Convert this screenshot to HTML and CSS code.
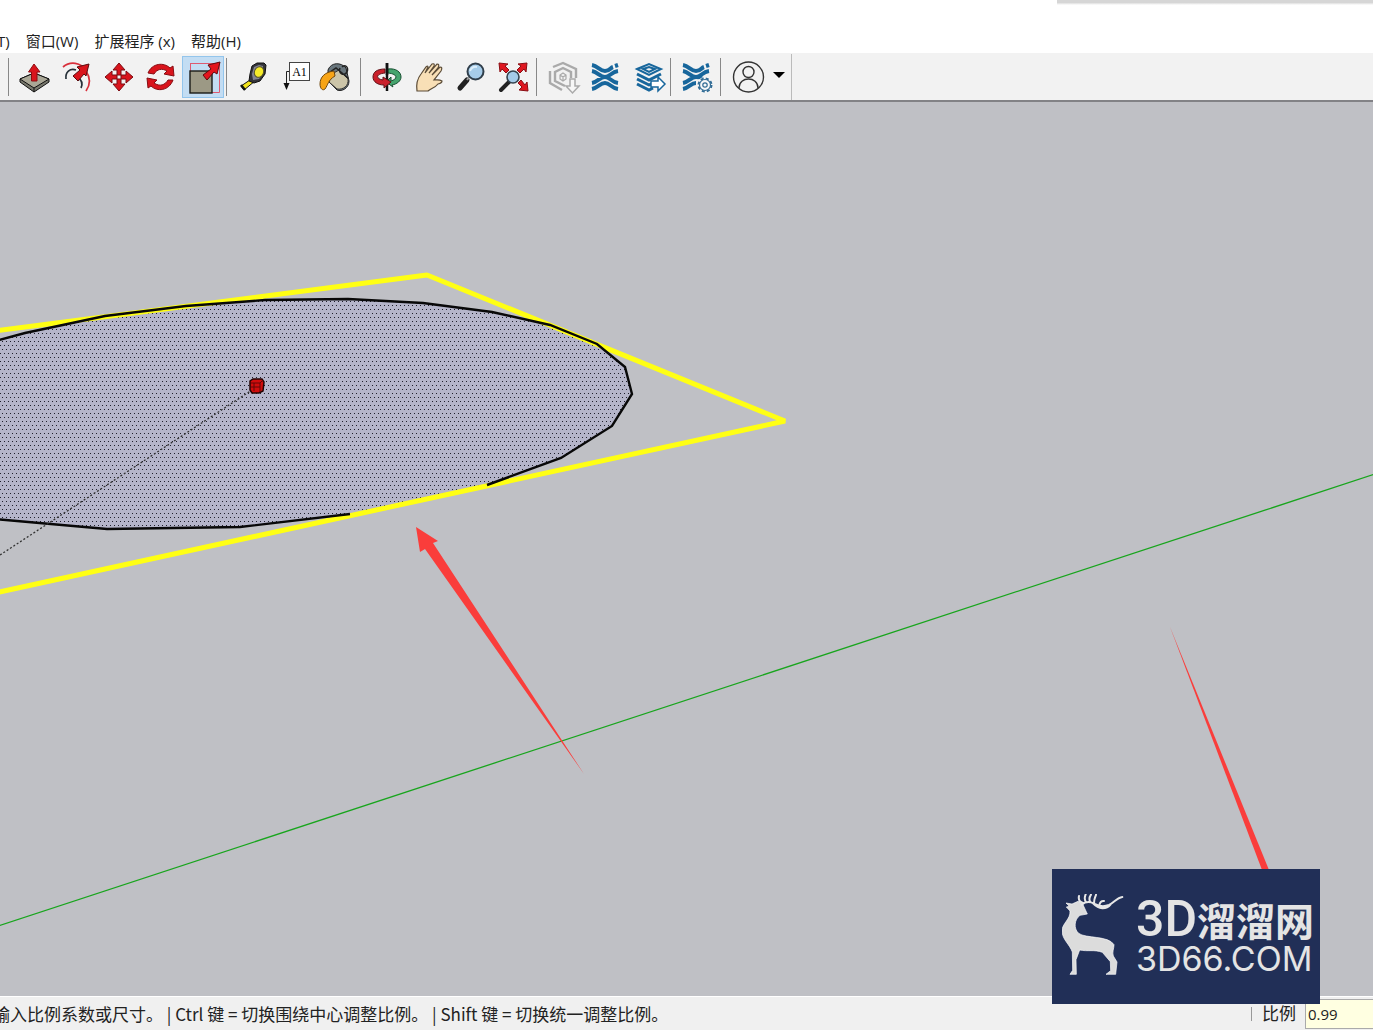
FILE: index.html
```html
<!DOCTYPE html>
<html lang="zh-CN">
<head>
<meta charset="utf-8">
<title>SketchUp</title>
<link rel="stylesheet" href="styles.css">
</head>
<body>
<div class="app">
  <header class="titlebar"><div class="titlebar-shadow"></div></header>
  <nav class="menubar">
    <button class="menu">T)</button>
    <button class="menu">窗口(W)</button>
    <button class="menu">扩展程序 (x)</button>
    <button class="menu">帮助(H)</button>
  </nav>
  <div class="toolbar-row">
    <div class="toolbar" role="toolbar">
      <div class="group">
        <button class="tool" aria-label="推/拉"><svg viewBox="0 0 42 42"><path d="M6 23L20 17L35 23V26L20 36L6 26Z" fill="#77776c" stroke="#111"/><path d="M6 23L20 17L35 23L20 32Z" fill="#aaa796" stroke="#111"/><path d="M20 32V36" stroke="#111"/><path d="M17.500 25V16H14.500L20 8L26 16H23V25Z" fill="#d9141c" stroke="#8d0c10"/></svg></button>
        <button class="tool" aria-label="偏移"><svg viewBox="0 0 42 42"><path d="M7 11C14 5 25 6 30 15C34 21 35 28 30 35" fill="none" stroke="#d8303c" stroke-width="1.700"/><path d="M10 23C9 16 14 12 20 14M21 20C26 24 27 28 25 32" fill="none" stroke="#263039" stroke-width="1.700"/><path d="M17 20L24 14L21 11L33 8L30 20L28 18L22 25Z" fill="#d9141c" stroke="#590b0e"/></svg></button>
        <button class="tool" aria-label="移动"><svg viewBox="0 0 42 42"><g fill="#d9141c" stroke="#7b0c12"><path d="M19 19V14H15L21 7L27 14H23V19Z"/><path d="M23 19H28V15L35 21L28 27V23H23Z"/><path d="M19 23V28H15L21 35L27 28H23V23Z"/><path d="M19 19H14V15L7 21L14 27V23H19Z"/></g></svg></button>
        <button class="tool" aria-label="旋转"><svg viewBox="0 0 42 42"><g fill="#d9141c" stroke="#850d13"><path d="M8 17C12 7 24 6 30 12L33 10L34 20L24 18L27 15C22 12 17 13 14 18Z"/><path d="M33 24C29 35 17 36 11 30L8 32L7 22L17 24L14 27C20 31 25 29 28 24Z"/></g></svg></button>
        <button class="tool tool-active" aria-label="缩放" aria-pressed="true"><svg viewBox="0 0 42 42"><path d="M8 7.500H37.500V36.500H29M8.500 7V15" fill="none" stroke="#de5a70"/><rect x="8" y="15" width="22" height="22" fill="#9c9985" stroke="#1a1a16" stroke-width="1.400"/><path d="M21 19L29 13L26 9L38 6L35 18L32 16L25 24Z" fill="#e3141d" stroke="#5c090d"/></svg></button>
      </div>
      <div class="group">
        <button class="tool" aria-label="卷尺"><svg viewBox="0 0 42 42"><path d="M9 30L21 22L23 25L12 34Z" fill="#f3e41d" stroke="#111"/><path d="M9 29L13 34" stroke="#111" stroke-width="2.500"/><path d="M18 18L20 10L25 7L32 7L34 9L33 18L28 25L22 27L17 25Z" fill="#34343a" stroke="#111"/><path d="M20 18L22 11L27 9L31 10L31 18L27 23L21 24Z" fill="#858694"/><ellipse cx="27" cy="16" rx="4.500" ry="5.500" transform="rotate(25 27 16)" fill="#f6ec29" stroke="#55522a"/></svg></button>
        <button class="tool" aria-label="文字标注"><svg viewBox="0 0 42 42"><rect x="15.500" y="6.500" width="20" height="18" fill="#fff" stroke="#444"/><path d="M15 15.500H12.500V28" fill="none" stroke="#222"/><path d="M9.500 27H15.500L12.500 34Z" fill="#111"/><text x="25.500" y="20" text-anchor="middle" class="annotation-icon">A1</text></svg></button>
        <button class="tool" aria-label="材质"><svg viewBox="0 0 42 42"><path d="M12 14C15 6 25 6 30 12L33 25C33 32 26 36 21 34L12 25Z" fill="#69767d" stroke="#222"/><path d="M16 18L23 14L32 23C33 30 27 34 21 33L13 26Z" fill="#ccc5a9" stroke="#333"/><path d="M14 16L20 12L32 22M24 12C22 17 28 21 31 16C33 11 29 8 26 11" stroke="#222" fill="none" stroke-width="1.500"/><path d="M18 15C9 16 4 21 4 28C4 33 7 35 9 33C12 29 12 24 19 20Z" fill="#f7a416" stroke="#6f460c"/></svg></button>
      </div>
      <div class="group">
        <button class="tool" aria-label="环绕观察"><svg viewBox="0 0 42 42"><path d="M21 7V35" stroke="#111" stroke-width="2.500"/><path d="M22 13C30 12 35 16 35 21C35 25 31 28 26 29L27 31L20 26L25 21V25C32 23 32 18 22 17Z" fill="#45a46d" stroke="#174f31"/><path d="M19 13C11 13 7 16 7 21C7 26 12 29 18 29V32L25 26L17 21V24C10 23 9 18 19 17Z" fill="#ca202b" stroke="#5e1117"/><path d="M21 7V19" stroke="#111" stroke-width="2.500"/></svg></button>
        <button class="tool" aria-label="平移"><svg viewBox="0 0 42 42"><path d="M9 35C8 28 9 23 13 18L18 11Q20 9 20 11L17 17L24 8Q27 7 26 10L21 17L29 8Q32 8 30 12L24 19L32 11Q35 11 33 15L26 24C28 24 31 23 34 25Q34 27 30 28C27 32 23 32 20 35Z" fill="#f8dfb6" stroke="#5a4b37" stroke-width="1.200"/></svg></button>
        <button class="tool" aria-label="缩放视图"><svg viewBox="0 0 42 42"><path d="M17 24L10 32" stroke="#222" stroke-width="5" stroke-linecap="round"/><path d="M20 20L17 24" stroke="#999" stroke-width="2"/><circle cx="25.500" cy="15.500" r="8" fill="#a6cce9" stroke="#303e4a" stroke-width="2"/><path d="M20 15Q22 10 27 11" fill="none" stroke="#dceefa" stroke-width="2"/></svg></button>
        <button class="tool" aria-label="充满视窗"><svg viewBox="0 0 42 42"><g fill="#df1720" stroke="#880e14"><path d="M7 7L16 8L13 10L17 14L14 17L10 13L8 16Z"/><path d="M35 7L26 8L29 10L25 14L28 17L32 13L34 16Z"/><path d="M36 35L27 34L30 31L26 27L29 24L33 29L35 26Z"/></g><path d="M17 26L9 34" stroke="#222" stroke-width="4" stroke-linecap="round"/><circle cx="21" cy="21" r="6" fill="#a4cae8" stroke="#34424d" stroke-width="1.600"/></svg></button>
      </div>
      <div class="group">
        <button class="tool" aria-label="3D Warehouse"><svg viewBox="0 0 42 42" fill="none" stroke="#aaa" stroke-width="2.400"><path d="M11 11L21 7L34 13V22M8 15V27L20 34"/><path d="M23 30L13 25V16L21 12L29 16V22"/><path d="M21 17L24 19V23L21 25L18 23V19ZM18 19L21 21L24 19M21 21V25" stroke-width="1.200"/><path d="M28 23H33V30H37L30.500 37L24 30H28Z" fill="#f7f7f7" stroke-width="1.500"/></svg></button>
        <button class="tool" aria-label="扩展仓库"><svg viewBox="0 0 42 42"><g class="blue-line wide"><path d="M8 9C14 10 16 15 21 15S26 12 29 11M8 15C14 16 16 21 21 21S27 16 34 15M8 27C14 26 16 21 21 21S27 26 34 27M8 33C14 32 16 27 21 27S27 32 34 33"/><path d="M31 10L34 9"/></g></svg></button>
        <button class="tool" aria-label="发送图层"><svg viewBox="0 0 42 42"><g class="blue-line"><path d="M11 13L23 8L35 13L23 19ZM17 13L23 11L29 13L23 16Z"/><path d="M11 18L23 24L35 18M11 23L23 29L26 28M11 28L23 34L27 32" stroke-width="3"/></g><path d="M25 25H32V21L39 28L32 35V31H25Z" fill="#fff" stroke="#17669c" stroke-width="1.500"/></svg></button>
      </div>
      <div class="group">
        <button class="tool" aria-label="扩展管理"><svg viewBox="0 0 42 42"><g class="blue-line wide"><path d="M7 9C13 10 15 15 20 15S25 12 28 11M7 15C13 16 15 21 20 21S26 16 33 15M7 27C13 26 15 21 20 21S25 22 28 24M7 33C13 32 15 27 20 27"/><path d="M30 10L33 9"/></g><circle cx="29" cy="29" r="8" fill="#f6f7f8"/><circle cx="29" cy="29" r="6.500" fill="none" stroke="#326c95" stroke-width="2" stroke-dasharray="3 2.100"/><circle cx="29" cy="29" r="5.500" fill="#f6f7f8" stroke="#326c95" stroke-width="1.200"/><circle cx="29" cy="29" r="2.200" fill="none" stroke="#326c95" stroke-width="1.200"/></svg></button>
      </div>
      <div class="group">
        <button class="tool" aria-label="账户"><svg viewBox="0 0 42 42" fill="none" stroke="#333" stroke-width="1.400"><circle cx="22.500" cy="21" r="15"/><circle cx="22.500" cy="16" r="5.500"/><path d="M13 32C13 20 32 20 32 32"/></svg></button>
        <button class="caret" aria-label="账户菜单"><svg viewBox="0 0 18 42"><path d="M5 16H17L11 22Z"/></svg></button>
      </div>
    </div>
  </div>
  <main class="viewport">
    <svg class="scene" viewBox="0 102 1373 894" preserveAspectRatio="xMinYMin slice">
      <defs>
        <pattern id="face-dots" width="4" height="8" patternUnits="userSpaceOnUse"><rect width="4" height="8" fill="#b5b5ca"/><path d="M0 1h1v1h-1zM2 5h1v1h-1z" fill="#20202c"/></pattern>
      </defs>
      <path d="M-2 926L1375 474" stroke="#18a51d" stroke-width="1.300"/>
      <path d="M-5 341L105 316L186 306L265 300L348 299L423 303L492 312L550 325L597 344L625 367L632 394L612 426L561 458L487 485L350 514L240 527L107 529L-5 519Z" fill="url(#face-dots)"/>
      <path d="M-5 331L427 275L785 421L-5 593" fill="none" stroke="#ffff14" stroke-width="5" stroke-linejoin="bevel"/>
      <path d="M-5 341L25 333L105 316L186 306L265 300L348 299L423 303L492 312L550 325L597 344L625 367L632 394L612 426L561 458L487 485M350 514L240 527L107 529L-5 519" fill="none" stroke="#080808" stroke-width="2.400"/>
      <path d="M0 555L252 390" stroke="#333" stroke-width="1.300" stroke-dasharray="2 2"/>
      <path d="M250 381L253 379H262L264 382L263 391L259 393H252L250 390Z" fill="#d00c0c" stroke="#240404" stroke-width="1.500"/>
      <path d="M251 383H260V392M260 383L263 380M254 383V391M251 387H260" fill="none" stroke="#650606"/>
      <path d="M416 527L438 541L433 543L584 774L425 549L420 552Z" fill="#fa3d3b"/>
      <path d="M1170 627L1269 870H1262Z" fill="#fa3d3b"/>
    </svg>
    <div class="watermark">
      <svg class="deer" viewBox="66 102 192 258"><path d="M78 129L96 132L114 124L128 132L142 162L120 166C103 178 100 206 116 220C137 236 205 226 222 254C222 266 216 276 220 288L231 306L227 343H198L212 332L211 305L187 277C164 268 142 275 119 270L108 299L109 343H90L98 331L97 276C89 253 67 239 66 213C66 190 92 178 90 153L79 141L88 139Z" fill="#dcdcdc" stroke="#fff" stroke-width="2"/><path d="M125 134C135 126 148 123 162 131S190 142 207 135C222 128 231 113 247 111M129 129C117 125 115 117 117 108M138 126C131 117 134 111 137 103M151 126C145 117 149 110 153 104M163 131C160 121 166 112 168 104M178 136C179 127 184 122 192 123M160 131C176 148 198 150 212 133" fill="none" stroke="#e7e7e7" stroke-width="6" stroke-linecap="round"/></svg>
      <div class="brand">
        <div class="brand-name"><span class="brand-latin">3D</span>溜溜网</div>
        <div class="brand-url">3D66.COM</div>
      </div>
    </div>
  </main>
  <footer class="statusbar">
    <p class="hint">输入比例系数或尺寸。 | Ctrl 键 = 切换围绕中心调整比例。 | Shift 键 = 切换统一调整比例。</p>
    <label class="measure-label" for="measure">比例</label>
    <input class="measure" id="measure" type="text" value="0.99">
  </footer>
</div>
</body>
</html>
```
FILE: styles.css
```css
* { box-sizing: border-box; }

body {
  margin: 0;
  font-family: "Open Sans", "Noto Sans CJK SC", sans-serif;
  color: #222;
  background: #fff;
}

button {
  margin: 0;
  padding: 0;
  border: 0;
  background: none;
  font: inherit;
  color: inherit;
}

.app {
  display: flex;
  flex-direction: column;
  height: 100vh;
  overflow: hidden;
}

.titlebar {
  display: flex;
  justify-content: flex-end;
  height: 30px;
}

.titlebar-shadow {
  width: 23%;
  height: 5px;
  background: linear-gradient(#d6d6d6 50%, #fff);
}

.menubar {
  display: flex;
  gap: 16px;
  height: 23px;
  margin-left: -3px;
  font-size: 15px;
  line-height: 23px;
}

.menu { white-space: nowrap; }

.toolbar-row {
  display: flex;
  height: 49px;
  padding-top: 1px;
  background: #f2f2f2;
  border-bottom: 2px solid #828286;
}

.toolbar {
  display: flex;
  align-items: center;
  padding: 0 3px 0 8px;
  border-right: 1px solid #bbb;
}

.group {
  display: flex;
  align-items: center;
  height: 38px;
  padding: 0 2px 0 5px;
  border-left: 1px solid #888;
}

.tool, .tool svg { display: block; width: 42px; height: 42px; }
.tool-active { background: #c3ddf3; outline: 1px solid #93c5ec; outline-offset: -1px; }
.caret, .caret svg { display: block; width: 18px; height: 42px; }
.annotation-icon { font: 12px "Liberation Serif", serif; }
.blue-line { fill: none; stroke: #17669c; stroke-width: 2; }
.wide { stroke-width: 4; }

.viewport {
  position: relative;
  flex: 1;
  min-height: 0;
  background: #bfc0c5;
}

.scene { display: block; width: 100%; height: 100%; }

.watermark {
  position: absolute;
  right: 53px;
  bottom: -8px;
  display: flex;
  align-items: center;
  gap: 10px;
  width: 268px;
  height: 135px;
  padding-left: 10px;
  background: #212f57;
  color: #e4e4e4;
}

.deer { width: 64px; height: 86px; }

.brand { white-space: nowrap; }

.brand-name {
  display: flex;
  align-items: center;
  height: 44px;
  font-family: "Noto Sans CJK SC", sans-serif;
  font-size: 39px;
  font-weight: 700;
  line-height: 44px;
}

.brand-latin {
  font-family: Roboto, sans-serif;
  font-size: 50px;
  font-weight: 500;
}

.brand-url {
  height: 36px;
  font-family: Inter, sans-serif;
  font-size: 34px;
  line-height: 36px;
}

.statusbar {
  display: flex;
  align-items: center;
  height: 34px;
  background: #f0f0f0;
  border-top: 1px solid #fff;
  font-size: 17px;
}

.hint {
  flex: 1;
  margin: 0 0 0 -7px;
  font-family: "Noto Sans CJK SC", sans-serif;
  white-space: nowrap;
}

.measure-label {
  padding: 0 9px 0 10px;
  border-left: 1px solid #999;
  line-height: 14px;
}

.measure {
  width: 68px;
  height: 30px;
  padding: 0 2px;
  border: 1px solid #aaa;
  border-right: 0;
  background: #ffffe1;
  font: 15px "Open Sans", sans-serif;
  color: #222;
}
```
